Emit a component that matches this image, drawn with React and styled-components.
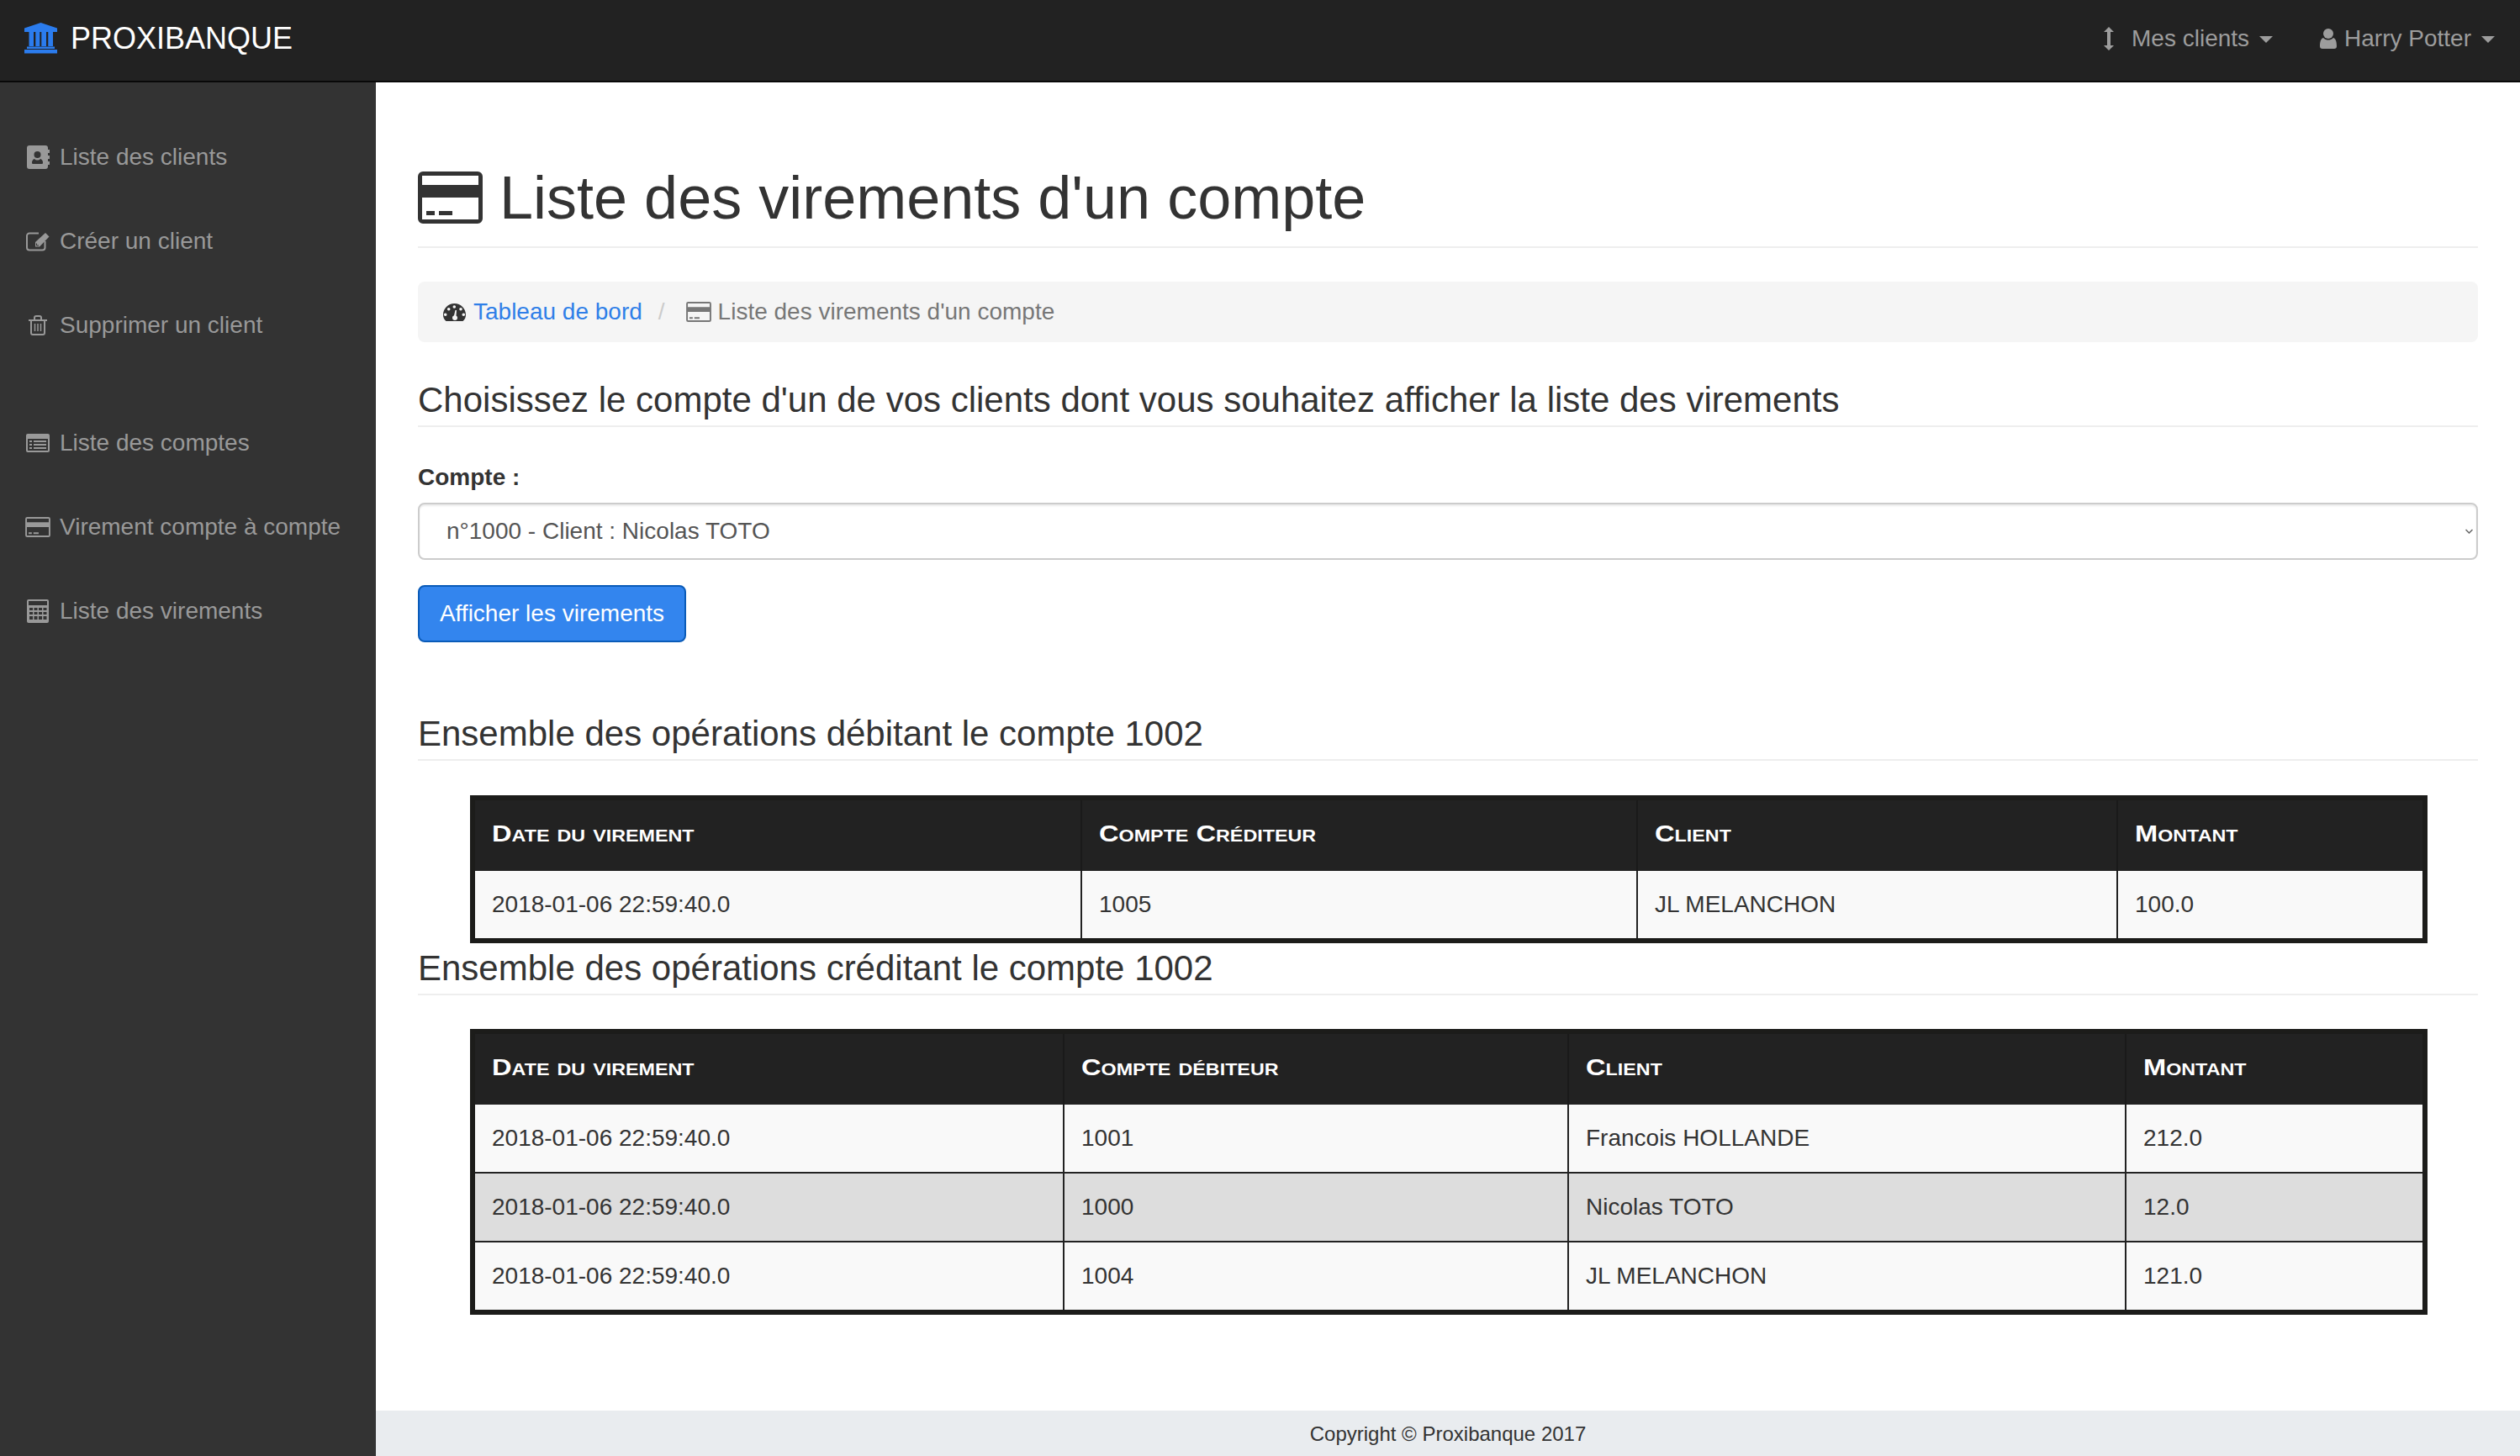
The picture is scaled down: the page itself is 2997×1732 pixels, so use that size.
import React from 'react';
import styled, { createGlobalStyle } from 'styled-components';

const GlobalStyle = createGlobalStyle`
  * {
    box-sizing: border-box;
  }
  html,
  body {
    margin: 0;
    padding: 0;
    background: #fff;
    font-family: 'Liberation Sans', Arial, sans-serif;
    font-size: 28px;
    color: #333;
  }
`;

const Page = styled.div`
  display: flex;
  flex-direction: column;
  width: 2997px;
  height: 1732px;
  overflow: hidden;
`;

const Navbar = styled.header`
  display: flex;
  align-items: center;
  justify-content: space-between;
  flex: 0 0 98px;
  padding: 0 30px 5px 29px;
  background: #222;
  border-bottom: 2px solid #080808;
`;

const Brand = styled.a`
  display: flex;
  align-items: center;
  gap: 16px;
  color: #fff;
  font-size: 36px;
  text-decoration: none;
`;

const NavRight = styled.nav`
  display: flex;
  align-items: center;
`;

const NavItem = styled.a`
  display: flex;
  align-items: center;
  margin-left: ${({ $gap }) => $gap}px;
  color: #9d9d9d;
  text-decoration: none;
  svg {
    margin-right: ${({ $iconGap }) => $iconGap}px;
  }
`;

const Caret = styled.span`
  width: 0;
  height: 0;
  margin-left: 12px;
  margin-top: 3px;
  border-top: 8px solid #9d9d9d;
  border-left: 8px solid transparent;
  border-right: 8px solid transparent;
`;

const Body = styled.div`
  display: flex;
  flex: 1;
  min-height: 0;
`;

const Sidebar = styled.aside`
  flex: 0 0 447px;
  padding-top: 39px;
  background: #333;
`;

const SideGroup = styled.ul`
  margin: 0 0 40px;
  padding: 0;
  list-style: none;
`;

const SideLink = styled.li`
  display: flex;
  align-items: center;
  height: 100px;
  padding-left: 26px;
  color: #999;
`;

const SideIcon = styled.span`
  display: flex;
  justify-content: center;
  width: 38px;
  margin-right: 7px;
`;

const Main = styled.main`
  display: flex;
  flex-direction: column;
  flex: 1;
  min-width: 0;
`;

const Content = styled.div`
  flex: 1;
  padding: 99px 50px 0;
`;

const PageHeader = styled.h1`
  display: flex;
  align-items: center;
  gap: 20px;
  margin: 0;
  height: 98px;
  padding-bottom: 20px;
  border-bottom: 2px solid #eee;
  font-size: 72px;
  font-weight: 400;
  line-height: 76px;
  color: #333;
`;

const Breadcrumb = styled.ol`
  display: flex;
  align-items: center;
  height: 72px;
  margin: 40px 0 0;
  padding: 0 30px;
  background: #f5f5f5;
  border-radius: 8px;
  list-style: none;
`;

const Crumb = styled.li`
  display: flex;
  align-items: center;
  gap: ${({ $active }) => ($active ? 8 : 9)}px;
  color: ${({ $active }) => ($active ? '#777' : '#2f7fe8')};
`;

const CrumbSeparator = styled.li`
  margin: 0 25px 0 19px;
  color: #ccc;
`;

const SectionTitle = styled.h3`
  margin: ${({ $top }) => $top}px 0 0;
  padding-bottom: 4px;
  border-bottom: 2px solid #eee;
  font-size: 42px;
  font-weight: 400;
  line-height: 52px;
  color: #333;
`;

const FieldLabel = styled.label`
  display: block;
  margin-top: 45px;
  font-weight: 700;
  line-height: 30px;
`;

const SelectWrap = styled.div`
  position: relative;
  margin-top: 15px;
`;

const Select = styled.select`
  display: block;
  width: 100%;
  height: 68px;
  padding: 0 30px 2px 32px;
  appearance: none;
  background: #fff;
  border: 2px solid #ccc;
  border-radius: 8px;
  box-shadow: inset 0 2px 2px rgba(0, 0, 0, 0.075);
  font-family: inherit;
  font-size: 28px;
  color: #555;
`;

const Chevron = styled.svg`
  position: absolute;
  top: 31px;
  right: 6px;
  width: 9px;
  height: 6px;
`;

const Button = styled.button`
  display: block;
  width: 319px;
  height: 68px;
  margin-top: 30px;
  padding: 0;
  background: #3385ee;
  border: 2px solid #0a5bb8;
  border-radius: 8px;
  font-family: inherit;
  font-size: 28px;
  color: #fff;
`;

const Table = styled.table`
  width: 2328px;
  margin: ${({ $top }) => $top}px 0 0 62px;
  table-layout: fixed;
  border-collapse: separate;
  border-spacing: 0;
  border: 6px solid #1c1c1a;
  tbody tr + tr td {
    height: 82px;
    border-top: 2px solid #222;
  }
`;

const HeadCell = styled.th`
  height: 84px;
  padding: 0 20px 5px;
  background: #222;
  border-right: 2px solid #1a1a1a;
  color: #fff;
  font-size: 28px;
  font-variant: small-caps;
  font-weight: 700;
  text-align: left;
  white-space: nowrap;
  &:last-child {
    border-right: 0;
  }
`;

/* the small caps of the header are wider than the font draws them */
const HeadLabel = styled.span`
  display: inline-block;
  transform: scaleX(1.165);
  transform-origin: left center;
`;

const Row = styled.tr`
  background: ${({ $striped }) => ($striped ? '#ddd' : '#f9f9f9')};
`;

const Cell = styled.td`
  height: 80px;
  padding: 0 20px 1px;
  border-right: 2px solid #222;
  color: #333;
  &:last-child {
    border-right: 0;
  }
`;

const Footer = styled.footer`
  display: flex;
  align-items: center;
  justify-content: center;
  flex: 0 0 54px;
  padding-top: 2px;
  background: #e9ecef;
  font-size: 24px;
  color: #333;
`;

/* icons drawn to match the Font Awesome 4 glyphs of the page */
const BankIcon = () => (
  <svg width="39" height="37" viewBox="0 0 39 37" fill="#2b7cee">
    <path d="M19.500 0 39 6.500V11H0V6.500z" />
    <path d="M5.500 11H11v17H5.500zM13.300 11h5v17h-5zM20.300 11H26v17h-5.700zM28.300 11H34v17h-5.700z" />
    <path d="M3 28.500h33V31H3zM0 32h39v4.500H0z" />
  </svg>
);

const AddressBookIcon = () => (
  <svg width="27" height="28" viewBox="0 0 27 28" fill="#999">
    <path
      fillRule="evenodd"
      d="M3 0h19a3 3 0 0 1 3 3v22a3 3 0 0 1-3 3H3a3 3 0 0 1-3-3V3a3 3 0 0 1 3-3zM12.500 7a4 4 0 1 0 0 8 4 4 0 0 0 0-8zM7 22h11c1 0 1-1 1-2 0-2-2-4-3-4-1 1-2 1.500-3.500 1.500S10 17 9 16c-1 0-3 2-3 4 0 1 0 2 1 2z"
    />
    <path d="M25 5h2v4h-2zM25 12h2v4h-2zM25 19h2v4h-2z" />
  </svg>
);

const EditIcon = () => (
  <svg width="28" height="23" viewBox="0 0 28 23" fill="none">
    <path
      d="M22.500 11v7.500a3 3 0 0 1-3 3H4a3 3 0 0 1-3-3V4.500a3 3 0 0 1 3-3h11"
      stroke="#999"
      strokeWidth="2"
    />
    <path d="M11 12 23 1l4.500 4.500L16 17.500h-5z" fill="#999" />
    <path d="M12.500 13.500v2.500h2.500" stroke="#333" strokeWidth="1" />
  </svg>
);

const TrashIcon = () => (
  <svg width="22" height="24" viewBox="0 0 22 24" fill="none" stroke="#999" strokeWidth="2">
    <path d="M0 6h22" />
    <path d="M3 6v15a2 2 0 0 0 2 2h12a2 2 0 0 0 2-2V6" />
    <path d="M7 6V3a2 2 0 0 1 2-2h4a2 2 0 0 1 2 2v3" />
    <path d="M7.500 10v9M11 10v9M14.500 10v9" strokeWidth="1.500" />
  </svg>
);

const ListIcon = () => (
  <svg width="28" height="22" viewBox="0 0 28 22" fill="#999">
    <path
      fillRule="evenodd"
      d="M2 0h24a2 2 0 0 1 2 2v18a2 2 0 0 1-2 2H2a2 2 0 0 1-2-2V2a2 2 0 0 1 2-2zM2 6v14h24V6z"
    />
    <path d="M4 8h3v2H4zM9 8h15v2H9zM4 12h3v2H4zM9 12h15v2H9zM4 16h3v2H4zM9 16h15v2H9z" />
  </svg>
);

const CardIcon = ({ width, height, color }) => (
  <svg width={width} height={height} viewBox="0 0 77 62" fill={color}>
    <path
      fillRule="evenodd"
      d="M6 0h65a6 6 0 0 1 6 6v50a6 6 0 0 1-6 6H6a6 6 0 0 1-6-6V6a6 6 0 0 1 6-6zM5 5v11h67V5zM5 31v26h67V31z"
    />
    <path d="M10 47h10v5H10zM25 47h16v5H25z" />
  </svg>
);

const CalculatorIcon = () => (
  <svg width="26" height="28" viewBox="0 0 26 28" fill="#999">
    <path
      fillRule="evenodd"
      d="M2 0h22a2 2 0 0 1 2 2v24a2 2 0 0 1-2 2H2a2 2 0 0 1-2-2V2a2 2 0 0 1 2-2zM2 2v5h22V2zM3 10v3h4v-3zM8.500 10v3h4v-3zM14 10v3h4v-3zM19.500 10v3h4v-3zM3 15v3h4v-3zM8.500 15v3h4v-3zM14 15v3h4v-3zM19.500 15v3h4v-3zM3 20v4h4v-4zM8.500 20v4h4v-4zM14 20v4h4v-4zM19.500 20v4h4v-4z"
    />
  </svg>
);

const ArrowsIcon = () => (
  <svg width="12" height="28" viewBox="0 0 12 28" fill="#9d9d9d">
    <path d="M6 0l6 6H8v16h4l-6 6-6-6h4V6H0z" />
  </svg>
);

const UserIcon = () => (
  <svg width="20" height="24" viewBox="0 0 20 24" fill="#9d9d9d">
    <circle cx="10" cy="6" r="6" />
    <path d="M4 11c2 2 4 2.500 6 2.500S14 13 16 11c3 1 4 5 4 10 0 2-1 3-3 3H3c-2 0-3-1-3-3 0-5 1-9 4-10z" />
  </svg>
);

const GaugeIcon = () => (
  <svg width="27" height="21" viewBox="0 0 27 21" fill="#333">
    <path
      fillRule="evenodd"
      d="M3.500 21C1.200 19 0 16.500 0 13.500 0 6 6 0 13.500 0S27 6 27 13.500c0 3-1.200 5.500-3.500 7.500zM13.300 2.200a1.800 1.800 0 1 0 0 3.600 1.800 1.800 0 0 0 0-3.600zM6.700 4.900a1.800 1.800 0 1 0 0 3.600 1.800 1.800 0 0 0 0-3.600zM21 4.900a1.800 1.800 0 1 0 0 3.600 1.800 1.800 0 0 0 0-3.600zM2.700 11.500a1.800 1.800 0 1 0 0 3.600 1.800 1.800 0 0 0 0-3.600zM24.300 11.500a1.800 1.800 0 1 0 0 3.600 1.800 1.800 0 0 0 0-3.600zM11 17a3 3 0 0 0 6 0c0-1-.6-2-1.500-2.500L16 8h-1.500L13 14.200c-1.200.4-2 1.500-2 2.800z"
    />
  </svg>
);

const debits = [
  { date: '2018-01-06 22:59:40.0', account: '1005', client: 'JL MELANCHON', amount: '100.0' },
];

const credits = [
  { date: '2018-01-06 22:59:40.0', account: '1001', client: 'Francois HOLLANDE', amount: '212.0' },
  { date: '2018-01-06 22:59:40.0', account: '1000', client: 'Nicolas TOTO', amount: '12.0' },
  { date: '2018-01-06 22:59:40.0', account: '1004', client: 'JL MELANCHON', amount: '121.0' },
];

const Transfers = ({ top, accountLabel, widths, rows }) => (
  <Table $top={top}>
    <colgroup>
      {widths.map((w, i) => (
        <col key={i} style={{ width: w }} />
      ))}
    </colgroup>
    <thead>
      <tr>
        <HeadCell><HeadLabel>Date du virement</HeadLabel></HeadCell>
        <HeadCell><HeadLabel>{accountLabel}</HeadLabel></HeadCell>
        <HeadCell><HeadLabel>Client</HeadLabel></HeadCell>
        <HeadCell><HeadLabel>Montant</HeadLabel></HeadCell>
      </tr>
    </thead>
    <tbody>
      {rows.map((row, i) => (
        <Row key={row.account} $striped={i % 2 === 1}>
          <Cell>{row.date}</Cell>
          <Cell>{row.account}</Cell>
          <Cell>{row.client}</Cell>
          <Cell>{row.amount}</Cell>
        </Row>
      ))}
    </tbody>
  </Table>
);

const App = () => (
  <Page>
    <GlobalStyle />
    <Navbar>
      <Brand>
        <BankIcon />
        PROXIBANQUE
      </Brand>
      <NavRight>
        <NavItem $gap={0} $iconGap={21}>
          <ArrowsIcon />
          Mes clients
          <Caret />
        </NavItem>
        <NavItem $gap={56} $iconGap={9}>
          <UserIcon />
          Harry Potter
          <Caret />
        </NavItem>
      </NavRight>
    </Navbar>
    <Body>
      <Sidebar>
        <SideGroup>
          <SideLink>
            <SideIcon><AddressBookIcon /></SideIcon>
            Liste des clients
          </SideLink>
          <SideLink>
            <SideIcon><EditIcon /></SideIcon>
            Créer un client
          </SideLink>
          <SideLink>
            <SideIcon><TrashIcon /></SideIcon>
            Supprimer un client
          </SideLink>
        </SideGroup>
        <SideGroup>
          <SideLink>
            <SideIcon><ListIcon /></SideIcon>
            Liste des comptes
          </SideLink>
          <SideLink>
            <SideIcon><CardIcon width={30} height={24} color="#999" /></SideIcon>
            Virement compte à compte
          </SideLink>
          <SideLink>
            <SideIcon><CalculatorIcon /></SideIcon>
            Liste des virements
          </SideLink>
        </SideGroup>
      </Sidebar>
      <Main>
        <Content>
          <PageHeader>
            <CardIcon width={77} height={62} color="#333" />
            Liste des virements d'un compte
          </PageHeader>
          <Breadcrumb>
            <Crumb>
              <GaugeIcon />
              Tableau de bord
            </Crumb>
            <CrumbSeparator>/</CrumbSeparator>
            <Crumb $active>
              <CardIcon width={30} height={24} color="#777" />
              Liste des virements d'un compte
            </Crumb>
          </Breadcrumb>
          <SectionTitle $top={43}>
            Choisissez le compte d'un de vos clients dont vous souhaitez afficher la liste des virements
          </SectionTitle>
          <FieldLabel htmlFor="compte">Compte :</FieldLabel>
          <SelectWrap>
            <Select id="compte" defaultValue="1000">
              <option value="1000">n°1000 - Client : Nicolas TOTO</option>
            </Select>
            <Chevron viewBox="0 0 9 6" fill="none" stroke="#666" strokeWidth="1.500">
              <path d="M.5 1l4 4 4-4" />
            </Chevron>
          </SelectWrap>
          <Button type="button">Afficher les virements</Button>
          <SectionTitle $top={83}>Ensemble des opérations débitant le compte 1002</SectionTitle>
          <Transfers top={41} accountLabel="Compte Créditeur" widths={[722, 661, 571, 362]} rows={debits} />
          <SectionTitle $top={4}>Ensemble des opérations créditant le compte 1002</SectionTitle>
          <Transfers top={40} accountLabel="Compte débiteur" widths={[701, 600, 663, 352]} rows={credits} />
        </Content>
        <Footer>Copyright © Proxibanque 2017</Footer>
      </Main>
    </Body>
  </Page>
);

export default App;
